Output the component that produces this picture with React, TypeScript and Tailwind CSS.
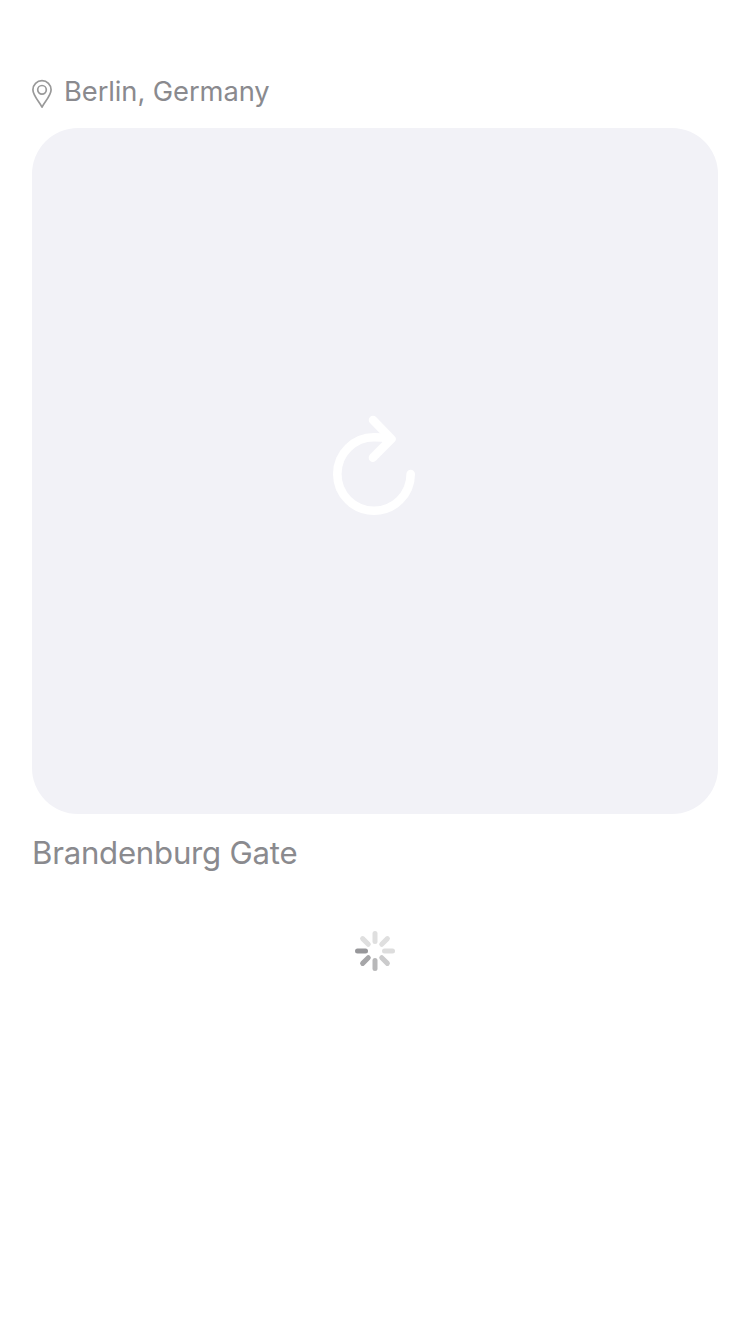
const SPOKES = [
  { angle: 0, color: '#dfdfdf' },
  { angle: 45, color: '#dfdfdf' },
  { angle: 90, color: '#dddddd' },
  { angle: 135, color: '#cbcbcc' },
  { angle: 180, color: '#b8b8b9' },
  { angle: 225, color: '#a6a6a8' },
  { angle: 270, color: '#97979a' },
  { angle: 315, color: '#dfdfdf' },
];

function PinIcon() {
  return (
    <svg className="h-10 w-5 shrink-0" viewBox="0 0 20 40" fill="none" stroke="#999999" strokeWidth="1.7" strokeLinejoin="round">
      <path d="M10 35.1C7.5 30.2 .9 23.5 .9 17.8a9.1 9.1 0 0 1 18.2 0C19.1 23.5 12.5 30.2 10 35.1Z" />
      <circle cx="10" cy="17.8" r="4.3" />
    </svg>
  );
}

function ReloadIcon() {
  return (
    <svg className="h-[104px] w-[86px]" viewBox="0 0 86 104" fill="none" stroke="white" strokeWidth="8.6" strokeLinecap="round" strokeLinejoin="round">
      <path d="M79.7 60A36.7 36.7 0 1 1 43 23.3C47 23.3 52 23.4 57 24.5" />
      <path d="M42 6 60.4 24.9 42 43.6" />
    </svg>
  );
}

function Spinner() {
  return (
    <svg className="h-10 w-10" viewBox="0 0 40 40" strokeWidth="5" strokeLinecap="round">
      {SPOKES.map(({ angle, color }) => (
        <path key={angle} d="M20 2.5V10.5" stroke={color} transform={`rotate(${angle} 20 20)`} />
      ))}
    </svg>
  );
}

export default function App() {
  return (
    <main className="flex min-h-[1334px] w-full flex-col bg-white px-8 pt-18 font-['Inter',sans-serif] text-[#8a8a8e]">
      <header className="flex h-10 items-center gap-3">
        <PinIcon />
        <p className="pb-px text-[27.3px] leading-[39px] tracking-[-0.07px] whitespace-nowrap">Berlin, Germany</p>
      </header>
      <section className="mt-4 flex h-[686px] w-full items-center justify-center rounded-[46px] bg-[#f2f2f7]">
        <button aria-label="Reload" className="mb-2.5 -ml-0.5">
          <ReloadIcon />
        </button>
      </section>
      <p className="mt-[18px] text-[31.2px] leading-[42px] tracking-[-0.25px] whitespace-nowrap">Brandenburg Gate</p>
      <div className="mt-[57px] flex justify-center">
        <Spinner />
      </div>
    </main>
  );
}
